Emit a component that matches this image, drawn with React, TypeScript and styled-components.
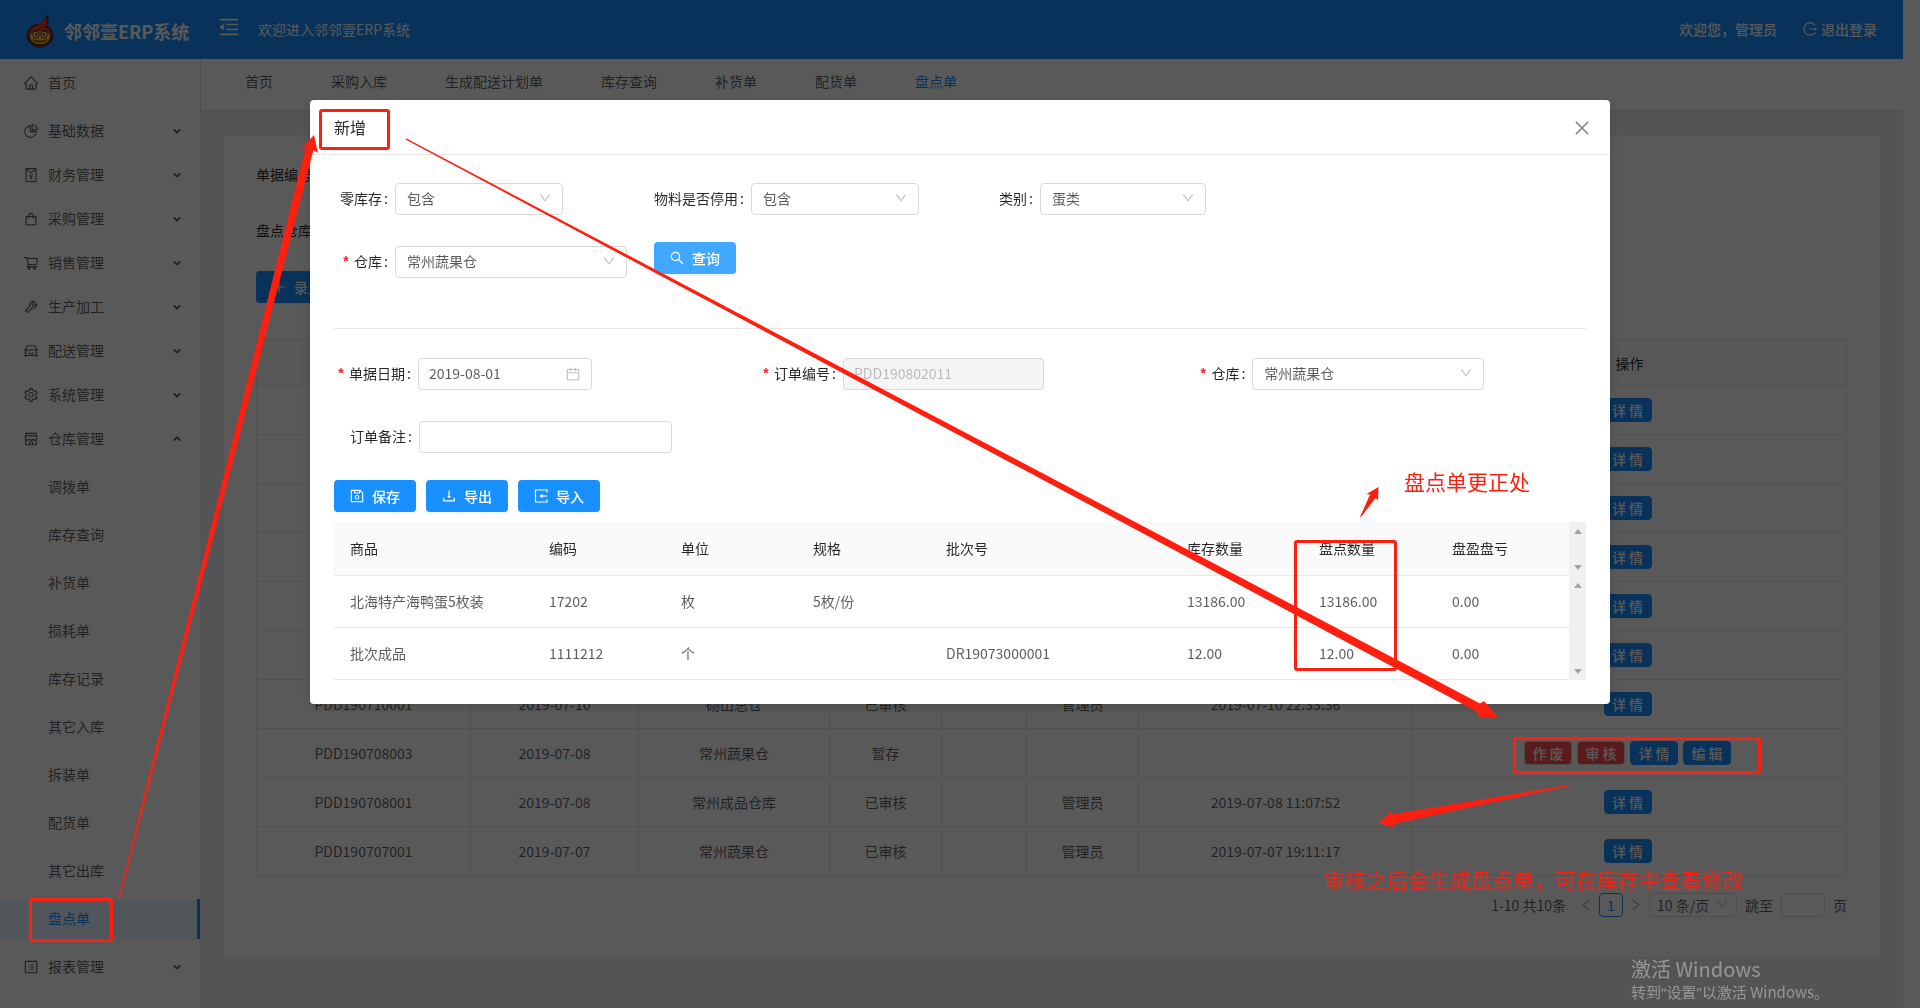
import React from 'react';
import styled, { createGlobalStyle } from 'styled-components';
import {
  AiOutlineCalendar,
  AiOutlineCar,
  AiOutlineClose,
  AiOutlineDown,
  AiOutlineDownload,
  AiOutlineHome,
  AiOutlineLeft,
  AiOutlineLogout,
  AiOutlineMenuFold,
  AiOutlinePieChart,
  AiOutlinePlus,
  AiOutlineProfile,
  AiOutlineRedEnvelope,
  AiOutlineRight,
  AiOutlineSave,
  AiOutlineSearch,
  AiOutlineSetting,
  AiOutlineShop,
  AiOutlineShopping,
  AiOutlineShoppingCart,
  AiOutlineTool,
} from 'react-icons/ai';

const blue = '#1890ff';
const line = '#e8e8e8';
const mark = '#ff1f10';

const GlobalStyle = createGlobalStyle`
  * { box-sizing: border-box; }
  body {
    margin: 0;
    overflow: hidden;
    background: #fff;
    color: rgba(0, 0, 0, 0.65);
    font: 14px/22px "Noto Sans CJK SC", "Noto Sans", sans-serif;
  }
  button, input, select { font: inherit; color: inherit; }
  button { cursor: pointer; }
  a { color: inherit; text-decoration: none; }
  svg { display: block; flex: none; }
`;

/* ---------- page frame ---------- */

const Page = styled.div`
  display: flex;
  flex-direction: column;
  height: 100vh;
  padding-right: 17px;
`;

const TopBar = styled.header`
  display: flex;
  align-items: center;
  flex: none;
  height: 59px;
  padding: 0 26px 2px;
  background: ${blue};
  color: #fff;
`;

const Brand = styled.div`
  display: flex;
  align-items: center;
  gap: 10px;
  width: 191px;
  padding-top: 5px;
  font-size: 18px;
  font-weight: 700;
  white-space: nowrap;
`;

const FoldButton = styled.button`
  padding: 0;
  border: 0;
  background: none;
  margin: 0 17px 4px 0;
`;

const Account = styled.div`
  display: flex;
  gap: 25px;
  margin-left: auto;
  font-weight: 500;
`;

const LogoutLink = styled.a`
  display: flex;
  align-items: center;
  gap: 3px;
`;

const Columns = styled.div`
  display: flex;
  flex: 1;
  min-height: 0;
`;

const SideMenu = styled.nav`
  flex: none;
  width: 200px;
  padding-top: 4px;
`;

const MenuRow = styled.a<{ $gap: number; $active?: boolean }>`
  display: flex;
  align-items: center;
  gap: 8px;
  height: 40px;
  margin-bottom: ${(p) => p.$gap}px;
  padding: 0 16px 0 23px;
  border-right: 3px solid ${(p) => (p.$active ? blue : 'transparent')};
  background: ${(p) => (p.$active ? '#e6f7ff' : 'transparent')};
  color: ${(p) => (p.$active ? blue : 'inherit')};
`;

const MenuLabel = styled.span<{ $sub?: boolean }>`
  flex: 1;
  padding: 0 0 2px ${(p) => (p.$sub ? 25 : 1)}px;
`;

const Main = styled.main`
  display: flex;
  flex-direction: column;
  flex: 1;
  min-width: 0;
  background: #f0f0f5;
`;

const TabBar = styled.nav`
  display: flex;
  align-items: center;
  flex: none;
  gap: 58px;
  height: 52px;
  padding: 0 44px 8px;
  border-left: 1px solid #d9d9d9;
  border-bottom: 1px solid #d9d9d9;
  background: #fff;
`;

const Tab = styled.a<{ $active: boolean }>`
  color: ${(p) => (p.$active ? blue : 'inherit')};
`;

const Card = styled.section`
  margin: 24px;
  padding: 20px 32px 40px;
  background: #fff;
`;

const FilterRow = styled.div`
  display: flex;
  align-items: center;
  height: 40px;
  margin-bottom: 16px;
`;

/* ---------- form parts ---------- */

const Label = styled.label<{ $min?: number; $required?: boolean }>`
  min-width: ${(p) => p.$min ?? 0}px;
  text-align: right;
  white-space: nowrap;
  color: rgba(0, 0, 0, 0.85);
  &::before {
    content: '${(p) => (p.$required ? '*' : '')}';
    margin-right: ${(p) => (p.$required ? 4 : 0)}px;
    color: #f5222d;
    font-family: "Liberation Mono", monospace;
    font-size: 14px;
    font-weight: 700;
  }
  &::after {
    content: ':';
    margin: 0 7px 0 2px;
  }
`;

const Control = styled.span<{ $width: number; $small?: boolean }>`
  position: relative;
  display: inline-flex;
  width: ${(p) => p.$width}px;
  height: ${(p) => (p.$small ? 24 : 32)}px;
  svg {
    position: absolute;
    right: ${(p) => (p.$small ? 8 : 11)}px;
    top: 50%;
    margin-top: -8px;
    color: rgba(0, 0, 0, 0.25);
    pointer-events: none;
  }
`;

const SelectBox = styled.select<{ $small?: boolean }>`
  width: 100%;
  padding: 0 ${(p) => (p.$small ? 7 : 11)}px 2px;
  border: 1px solid #d9d9d9;
  border-radius: 4px;
  background: transparent;
  appearance: none;
`;

const TextBox = styled.input`
  width: 100%;
  padding: 0 10px 2px;
  border: 1px solid #d9d9d9;
  border-radius: 4px;
  background: #fff;
  &:disabled {
    background: #f5f5f5;
    color: rgba(0, 0, 0, 0.25);
  }
`;

const PrimaryButton = styled.button<{ $hover?: boolean }>`
  display: inline-flex;
  align-items: center;
  justify-content: center;
  gap: 7px;
  height: 32px;
  padding: 0 16px 1px 15px;
  border: 0;
  border-radius: 4px;
  background: ${(p) => (p.$hover ? '#40a9ff' : blue)};
  box-shadow: 0 2px 0 rgba(0, 0, 0, 0.045);
  color: #fff;
  font-weight: 500;
`;

const SmallButton = styled.button<{ $danger?: boolean }>`
  height: 24px;
  width: 48px;
  padding: 0 7px 1px;
  border: 1px solid ${(p) => (p.$danger ? '#d9d9d9' : blue)};
  border-radius: 4px;
  background: ${(p) => (p.$danger ? '#ff4d4f' : blue)};
  color: #fff;
  font-weight: 500;
  line-height: 20px;
  white-space: nowrap;
`;

/* ---------- order list ---------- */

const OrderTable = styled.table`
  width: 100%;
  margin-top: 32px;
  border-collapse: collapse;
  table-layout: fixed;
  text-align: center;
  th, td {
    height: 49px;
    padding: 0 8px;
    border: 1px solid ${line};
    font-weight: 400;
  }
  th {
    height: 46px;
    background: #fafafa;
    color: rgba(0, 0, 0, 0.85);
  }
`;

const Actions = styled.div`
  display: flex;
  justify-content: center;
  gap: 5px;
  padding-right: 4px;
`;

const Pager = styled.div`
  display: flex;
  align-items: center;
  justify-content: flex-end;
  gap: 8px;
  margin-top: 17px;
`;

const PagerSteps = styled.div`
  display: flex;
  gap: 1px;
`;

const PagerButton = styled.button<{ $current?: boolean }>`
  display: flex;
  align-items: center;
  justify-content: center;
  width: 24px;
  height: 24px;
  padding: 0;
  border: 1px solid ${(p) => (p.$current ? blue : 'transparent')};
  border-radius: 4px;
  background: none;
  color: ${(p) => (p.$current ? blue : 'rgba(0, 0, 0, 0.35)')};
`;

/* ---------- dialog ---------- */

const Mask = styled.div`
  position: fixed;
  inset: 0;
  display: flex;
  align-items: flex-start;
  justify-content: center;
  padding-top: 100px;
  background: rgba(0, 0, 0, 0.65);
`;

const Dialog = styled.div`
  width: 1300px;
  max-width: 100%;
  border-radius: 4px;
  background: #fff;
  box-shadow: 0 4px 12px rgba(0, 0, 0, 0.15);
`;

const DialogHead = styled.div`
  display: flex;
  align-items: center;
  justify-content: space-between;
  height: 55px;
  padding: 0 18px 0 24px;
  border-bottom: 1px solid ${line};
`;

const DialogTitle = styled.h2`
  margin: 0;
  color: rgba(0, 0, 0, 0.85);
  font-size: 16px;
  font-weight: 400;
`;

const CloseButton = styled.button`
  padding: 2px 0 0;
  border: 0;
  background: none;
  color: rgba(0, 0, 0, 0.45);
`;

const DialogBody = styled.div`
  padding: 24px;
`;

const FormGrid = styled.div<{ $columns: string }>`
  display: grid;
  grid-template-columns: ${(p) => p.$columns};
  grid-auto-rows: 40px;
  row-gap: 23px;
`;

const Field = styled.div`
  display: flex;
  align-items: center;
`;

const Divider = styled.hr`
  height: 1px;
  margin: 46px 0 25px;
  border: 0;
  background: ${line};
`;

const Toolbar = styled.div`
  display: flex;
  gap: 10px;
  margin: 23px 0 10px;
`;

const TableFrame = styled.div`
  display: flex;
`;

const GoodsTable = styled.table`
  flex: 1;
  min-width: 0;
  border-collapse: separate;
  border-spacing: 0;
  table-layout: fixed;
  text-align: left;
  th, td {
    height: 52px;
    padding: 0 0 2px 16px;
    border-bottom: 1px solid ${line};
    font-weight: 400;
  }
  th {
    height: 54px;
    background: #fafafa;
    color: rgba(0, 0, 0, 0.85);
  }
`;

const ScrollColumn = styled.div`
  display: flex;
  flex-direction: column;
  width: 17px;
  background: #f0f0f0;
`;

const ScrollTrack = styled.div<{ $grow?: boolean }>`
  display: flex;
  flex-direction: column;
  align-items: center;
  justify-content: space-between;
  flex: ${(p) => (p.$grow ? '1' : '0 0 54px')};
  padding: 7px 0 6px;
`;

/* ---------- notes drawn over the page ---------- */

const Notes = styled.div`
  position: fixed;
  inset: 0;
  overflow: hidden;
  pointer-events: none;
`;

const Marks = styled.svg`
  position: absolute;
  left: 0;
  top: 0;
`;

const Note = styled.span<{ $left: number; $top: number }>`
  position: absolute;
  left: ${(p) => p.$left}px;
  top: ${(p) => p.$top}px;
  color: ${mark};
  font-size: 21px;
  line-height: 28px;
  white-space: nowrap;
`;

const Activation = styled.div`
  position: absolute;
  left: 1631px;
  top: 956px;
  color: #979797;
  font-size: 15px;
  line-height: 20px;
  white-space: nowrap;
  strong {
    display: block;
    font-size: 20px;
    font-weight: 400;
    line-height: 26px;
  }
`;

const Quote = styled.span`
  font-family: "Noto Sans", sans-serif;
`;

/* ---------- small drawings ---------- */

const Logo = () => (
  <svg width="28" height="34" viewBox="0 0 28 34" aria-hidden="true">
    <path d="M14 10C17 8 20 4 22 1C22 5 22 8 21 11Z" fill="#f5222d" stroke="#3b1a1a" strokeWidth="1" />
    <ellipse cx="14" cy="21.500" rx="12.500" ry="11" fill="#e8342c" stroke="#3b1a1a" strokeWidth="1.500" />
    <path d="M10 12C14 9 18 6 21 4L20.500 12Z" fill="#e8342c" />
    <path d="M3.500 22C4 18 8 16.500 14 16.500S24 18 24.500 22C24.500 28 19 30.500 14 30.500S3.500 28 3.500 22Z" fill="#f7c325" stroke="#5a2a10" strokeWidth="1" />
    <circle cx="10" cy="20.500" r="3.300" fill="#f3d9a0" stroke="#5a2a10" />
    <circle cx="18" cy="20.500" r="3.300" fill="#f3d9a0" stroke="#5a2a10" />
    <circle cx="10.300" cy="20.500" r="1.300" fill="#5a2a10" />
    <circle cx="17.700" cy="20.500" r="1.300" fill="#5a2a10" />
    <path d="M7 25.500Q14 30 21 25.500" fill="none" stroke="#5a2a10" strokeWidth="1.300" />
  </svg>
);

const Chevron = ({ up }: { up?: boolean }) => (
  <svg width="8" height="6" viewBox="0 0 8 6" aria-hidden="true">
    <path
      d={up ? 'M0.700 4.700L4 1.400L7.300 4.700' : 'M0.700 1.300L4 4.600L7.300 1.300'}
      fill="none"
      stroke="currentColor"
      strokeWidth="1.800"
    />
  </svg>
);

const Arrow = ({ down }: { down?: boolean }) => (
  <svg width="8" height="5" viewBox="0 0 8 5" aria-hidden="true">
    <path d={down ? 'M0 0H8L4 5Z' : 'M0 5H8L4 0Z'} fill="#a3a3a3" />
  </svg>
);

const ImportIcon = () => (
  <svg width="16" height="16" viewBox="0 0 16 16" aria-hidden="true">
    <path d="M14 4.500V2H2.500V14H14V11.500" fill="none" stroke="currentColor" strokeWidth="1.200" />
    <path d="M14 8H8.500" stroke="currentColor" strokeWidth="1.200" />
    <path d="M6.500 8L9.500 5.700V10.300Z" fill="currentColor" />
  </svg>
);

/* ---------- data ---------- */

const menuGroups = [
  { label: '基础数据', Icon: AiOutlinePieChart },
  { label: '财务管理', Icon: AiOutlineRedEnvelope },
  { label: '采购管理', Icon: AiOutlineShopping },
  { label: '销售管理', Icon: AiOutlineShoppingCart },
  { label: '生产加工', Icon: AiOutlineTool },
  { label: '配送管理', Icon: AiOutlineCar },
  { label: '系统管理', Icon: AiOutlineSetting },
];

const warehouseItems = ['调拨单', '库存查询', '补货单', '损耗单', '库存记录', '其它入库', '拆装单', '配货单', '其它出库', '盘点单'];

const tabs = ['首页', '采购入库', '生成配送计划单', '库存查询', '补货单', '配货单', '盘点单'];

const orderColumns = [214, 168, 191, 112, 85, 112, 274, 434];

const emptyOrder = ['', '', '', '', '', '', ''];
const orders = [
  ...Array.from({ length: 6 }, () => emptyOrder),
  ['PDD190710001', '2019-07-10', '砀山总仓', '已审核', '', '管理员', '2019-07-10 22:33:36'],
  ['PDD190708003', '2019-07-08', '常州蔬果仓', '暂存', '', '', ''],
  ['PDD190708001', '2019-07-08', '常州成品仓库', '已审核', '', '管理员', '2019-07-08 11:07:52'],
  ['PDD190707001', '2019-07-07', '常州蔬果仓', '已审核', '', '管理员', '2019-07-07 19:11:17'],
];

const goodsColumns = [
  { name: '商品', width: 199 },
  { name: '编码', width: 132 },
  { name: '单位', width: 132 },
  { name: '规格', width: 133 },
  { name: '批次号', width: 241 },
  { name: '库存数量', width: 132 },
  { name: '盘点数量', width: 133 },
  { name: '盘盈盘亏', width: 133 },
];

const goods = [
  ['北海特产海鸭蛋5枚装', '17202', '枚', '5枚/份', '', '13186.00', '13186.00', '0.00'],
  ['批次成品', '1111212', '个', '', 'DR19073000001', '12.00', '12.00', '0.00'],
];

/* ---------- composed parts ---------- */

interface SelectFieldProps {
  id: string;
  label: string;
  value: string;
  width: number;
  min?: number;
  required?: boolean;
}

const SelectField = ({ id, label, value, width, min, required }: SelectFieldProps) => (
  <Field>
    <Label htmlFor={id} $min={min} $required={required}>{label}</Label>
    <Control $width={width}>
      <SelectBox id={id} defaultValue={value}>
        <option>{value}</option>
      </SelectBox>
      <AiOutlineDown size={14} />
    </Control>
  </Field>
);

const Sidebar = () => (
  <SideMenu>
    <MenuRow href="#" $gap={8}>
      <AiOutlineHome size={16} />
      <MenuLabel>首页</MenuLabel>
    </MenuRow>
    {menuGroups.map(({ label, Icon }) => (
      <MenuRow href="#" key={label} $gap={4}>
        <Icon size={16} />
        <MenuLabel>{label}</MenuLabel>
        <Chevron />
      </MenuRow>
    ))}
    <MenuRow href="#" $gap={8}>
      <AiOutlineShop size={16} />
      <MenuLabel>仓库管理</MenuLabel>
      <Chevron up />
    </MenuRow>
    {warehouseItems.map((label) => (
      <MenuRow href="#" key={label} $gap={8} $active={label === '盘点单'}>
        <MenuLabel $sub>{label}</MenuLabel>
      </MenuRow>
    ))}
    <MenuRow href="#" $gap={4}>
      <AiOutlineProfile size={16} />
      <MenuLabel>报表管理</MenuLabel>
      <Chevron />
    </MenuRow>
  </SideMenu>
);

const OrderList = () => (
  <Card>
    <FilterRow>
      <Label htmlFor="f-code">单据编号</Label>
      <Control $width={168}><TextBox id="f-code" /></Control>
    </FilterRow>
    <FilterRow>
      <Label htmlFor="f-store">盘点仓库</Label>
      <Control $width={168}><TextBox id="f-store" /></Control>
    </FilterRow>
    <FormGrid $columns="max-content">
      <Field>
        <PrimaryButton><AiOutlinePlus size={16} />录入</PrimaryButton>
      </Field>
    </FormGrid>
    <OrderTable>
      <colgroup>
        {orderColumns.map((w, i) => <col key={i} style={{ width: w }} />)}
      </colgroup>
      <thead>
        <tr>
          {orderColumns.map((_, i) => <th key={i}>{i === 7 ? '操作' : ''}</th>)}
        </tr>
      </thead>
      <tbody>
        {orders.map((row, r) => (
          <tr key={r}>
            {row.map((cell, c) => <td key={c}>{cell}</td>)}
            <td>
              <Actions>
                {row[3] === '暂存' && <SmallButton $danger>作 废</SmallButton>}
                {row[3] === '暂存' && <SmallButton $danger>审 核</SmallButton>}
                <SmallButton>详 情</SmallButton>
                {row[3] === '暂存' && <SmallButton>编 辑</SmallButton>}
              </Actions>
            </td>
          </tr>
        ))}
      </tbody>
    </OrderTable>
    <Pager>
      <span>1-10 共10条</span>
      <PagerSteps>
        <PagerButton aria-label="上一页"><AiOutlineLeft size={14} /></PagerButton>
        <PagerButton $current>1</PagerButton>
        <PagerButton aria-label="下一页"><AiOutlineRight size={14} /></PagerButton>
        <Control $width={88} $small>
          <SelectBox $small aria-label="每页条数" defaultValue="10 条/页">
            <option>10 条/页</option>
          </SelectBox>
          <AiOutlineDown size={14} />
        </Control>
      </PagerSteps>
      <label htmlFor="jump">跳至</label>
      <Control $width={44} $small><TextBox id="jump" /></Control>
      <span>页</span>
    </Pager>
  </Card>
);

const CreateDialog = () => (
  <Dialog role="dialog" aria-labelledby="dialog-title">
    <DialogHead>
      <DialogTitle id="dialog-title">新增</DialogTitle>
      <CloseButton aria-label="关闭"><AiOutlineClose size={20} /></CloseButton>
    </DialogHead>
    <DialogBody>
      <FormGrid $columns="320px 345px 1fr">
        <SelectField id="zero" label="零库存" value="包含" width={168} min={61} />
        <SelectField id="disabled" label="物料是否停用" value="包含" width={168} />
        <SelectField id="kind" label="类别" value="蛋类" width={166} />
        <SelectField id="store" label="仓库" value="常州蔬果仓" width={232} min={61} required />
        <div>
          <PrimaryButton $hover><AiOutlineSearch size={16} />查询</PrimaryButton>
        </div>
      </FormGrid>
      <Divider />
      <FormGrid $columns="425px 440px 1fr">
        <Field>
          <Label htmlFor="date" $min={84} $required>单据日期</Label>
          <Control $width={174}>
            <TextBox id="date" defaultValue="2019-08-01" />
            <AiOutlineCalendar size={16} />
          </Control>
        </Field>
        <Field>
          <Label htmlFor="order" $min={84} $required>订单编号</Label>
          <Control $width={201}>
            <TextBox id="order" defaultValue="PDD190802011" disabled />
          </Control>
        </Field>
        <SelectField id="store2" label="仓库" value="常州蔬果仓" width={232} required />
        <Field>
          <Label htmlFor="remark" $min={85}>订单备注</Label>
          <Control $width={253}><TextBox id="remark" /></Control>
        </Field>
      </FormGrid>
      <Toolbar>
        <PrimaryButton><AiOutlineSave size={16} />保存</PrimaryButton>
        <PrimaryButton><AiOutlineDownload size={16} />导出</PrimaryButton>
        <PrimaryButton><ImportIcon />导入</PrimaryButton>
      </Toolbar>
      <TableFrame>
        <GoodsTable>
          <colgroup>
            {goodsColumns.map((c) => <col key={c.name} style={{ width: c.width }} />)}
          </colgroup>
          <thead>
            <tr>{goodsColumns.map((c) => <th key={c.name}>{c.name}</th>)}</tr>
          </thead>
          <tbody>
            {goods.map((row) => (
              <tr key={row[0]}>{row.map((cell, c) => <td key={c}>{cell}</td>)}</tr>
            ))}
          </tbody>
        </GoodsTable>
        <ScrollColumn>
          <ScrollTrack><Arrow /><Arrow down /></ScrollTrack>
          <ScrollTrack $grow><Arrow /><Arrow down /></ScrollTrack>
        </ScrollColumn>
      </TableFrame>
    </DialogBody>
  </Dialog>
);

const Annotations = () => (
  <Notes>
    <Marks width="1920" height="1008" viewBox="0 0 1920 1008" aria-hidden="true">
      <g fill="none" stroke={mark} strokeWidth="3">
        <rect x="320.500" y="110.500" width="68" height="38" rx="1.500" />
        <rect x="30.500" y="899.500" width="81" height="41" rx="1.500" />
        <rect x="1295.500" y="541.500" width="100" height="128" rx="1.500" />
        <rect x="1514.500" y="738.500" width="245" height="34" rx="1.500" />
      </g>
      <g fill={mark}>
        <path d="M118.300 899L305.500 148L301 149L314 135L318 153L313.500 150L119.700 899Z" />
        <path d="M406 138.300L1480 703.500L1484 701L1498 717L1479 717L1476.500 711.500L406 139.800Z" />
        <path d="M1360 517L1370 494.500L1366.500 494L1378.500 487L1378 500L1375.500 498L1361 517Z" />
        <path d="M1569 784.800L1391.500 814.500L1392 811L1378.500 823L1395 828L1393 824L1569 786Z" />
      </g>
    </Marks>
    <Note $left={1404} $top={467}>盘点单更正处</Note>
    <Note $left={1324} $top={865}>审核之后会生成盘点单，可在库存中查看修改</Note>
    <Activation>
      <strong>激活 Windows</strong>
      转到<Quote>“</Quote>设置<Quote>”</Quote>以激活 Windows。
    </Activation>
  </Notes>
);

export default function App() {
  return (
    <>
      <GlobalStyle />
      <Page>
        <TopBar>
          <Brand><Logo />邻邻壹ERP系统</Brand>
          <FoldButton aria-label="收起菜单"><AiOutlineMenuFold size={24} /></FoldButton>
          <span>欢迎进入邻邻壹ERP系统</span>
          <Account>
            <span>欢迎您，管理员</span>
            <LogoutLink href="#"><AiOutlineLogout size={16} />退出登录</LogoutLink>
          </Account>
        </TopBar>
        <Columns>
          <Sidebar />
          <Main>
            <TabBar>
              {tabs.map((t) => <Tab href="#" key={t} $active={t === '盘点单'}>{t}</Tab>)}
            </TabBar>
            <OrderList />
          </Main>
        </Columns>
      </Page>
      <Mask>
        <CreateDialog />
      </Mask>
      <Annotations />
    </>
  );
}
